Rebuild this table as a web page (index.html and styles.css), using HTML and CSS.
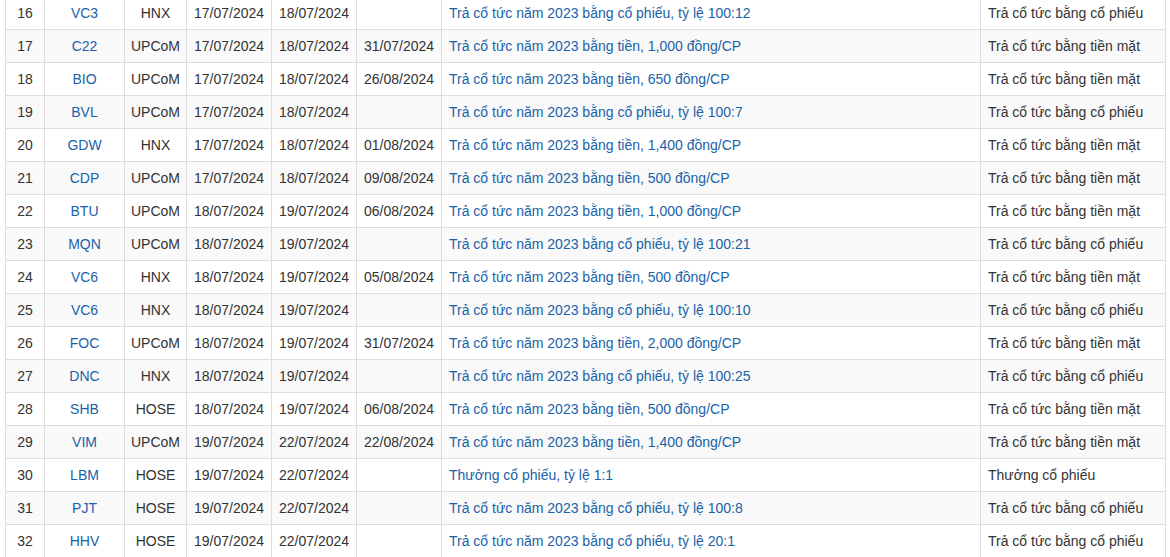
FILE: index.html
```html
<!DOCTYPE html>
<html lang="vi">
<head>
<meta charset="utf-8">
<link rel="stylesheet" href="styles.css">
</head>
<body>
<div class="wrap">
<table class="grid">
<colgroup>
<col class="c-no"><col class="c-tk"><col class="c-ex"><col class="c-d1"><col class="c-d2"><col class="c-d3"><col class="c-desc"><col class="c-type">
</colgroup>
<tbody>
<tr><td class="ctr">16</td><td class="ctr"><a>VC3</a></td><td class="ctr">HNX</td><td class="ctr">17/07/2024</td><td class="ctr">18/07/2024</td><td class="ctr"></td><td><a>Trả cổ tức năm 2023 bằng cổ phiếu, tỷ lệ 100:12</a></td><td>Trả cổ tức bằng cổ phiếu</td></tr>
<tr class="alt"><td class="ctr">17</td><td class="ctr"><a>C22</a></td><td class="ctr">UPCoM</td><td class="ctr">17/07/2024</td><td class="ctr">18/07/2024</td><td class="ctr">31/07/2024</td><td><a>Trả cổ tức năm 2023 bằng tiền, 1,000 đồng/CP</a></td><td>Trả cổ tức bằng tiền mặt</td></tr>
<tr><td class="ctr">18</td><td class="ctr"><a>BIO</a></td><td class="ctr">UPCoM</td><td class="ctr">17/07/2024</td><td class="ctr">18/07/2024</td><td class="ctr">26/08/2024</td><td><a>Trả cổ tức năm 2023 bằng tiền, 650 đồng/CP</a></td><td>Trả cổ tức bằng tiền mặt</td></tr>
<tr class="alt"><td class="ctr">19</td><td class="ctr"><a>BVL</a></td><td class="ctr">UPCoM</td><td class="ctr">17/07/2024</td><td class="ctr">18/07/2024</td><td class="ctr"></td><td><a>Trả cổ tức năm 2023 bằng cổ phiếu, tỷ lệ 100:7</a></td><td>Trả cổ tức bằng cổ phiếu</td></tr>
<tr><td class="ctr">20</td><td class="ctr"><a>GDW</a></td><td class="ctr">HNX</td><td class="ctr">17/07/2024</td><td class="ctr">18/07/2024</td><td class="ctr">01/08/2024</td><td><a>Trả cổ tức năm 2023 bằng tiền, 1,400 đồng/CP</a></td><td>Trả cổ tức bằng tiền mặt</td></tr>
<tr class="alt"><td class="ctr">21</td><td class="ctr"><a>CDP</a></td><td class="ctr">UPCoM</td><td class="ctr">17/07/2024</td><td class="ctr">18/07/2024</td><td class="ctr">09/08/2024</td><td><a>Trả cổ tức năm 2023 bằng tiền, 500 đồng/CP</a></td><td>Trả cổ tức bằng tiền mặt</td></tr>
<tr><td class="ctr">22</td><td class="ctr"><a>BTU</a></td><td class="ctr">UPCoM</td><td class="ctr">18/07/2024</td><td class="ctr">19/07/2024</td><td class="ctr">06/08/2024</td><td><a>Trả cổ tức năm 2023 bằng tiền, 1,000 đồng/CP</a></td><td>Trả cổ tức bằng tiền mặt</td></tr>
<tr class="alt"><td class="ctr">23</td><td class="ctr"><a>MQN</a></td><td class="ctr">UPCoM</td><td class="ctr">18/07/2024</td><td class="ctr">19/07/2024</td><td class="ctr"></td><td><a>Trả cổ tức năm 2023 bằng cổ phiếu, tỷ lệ 100:21</a></td><td>Trả cổ tức bằng cổ phiếu</td></tr>
<tr><td class="ctr">24</td><td class="ctr"><a>VC6</a></td><td class="ctr">HNX</td><td class="ctr">18/07/2024</td><td class="ctr">19/07/2024</td><td class="ctr">05/08/2024</td><td><a>Trả cổ tức năm 2023 bằng tiền, 500 đồng/CP</a></td><td>Trả cổ tức bằng tiền mặt</td></tr>
<tr class="alt"><td class="ctr">25</td><td class="ctr"><a>VC6</a></td><td class="ctr">HNX</td><td class="ctr">18/07/2024</td><td class="ctr">19/07/2024</td><td class="ctr"></td><td><a>Trả cổ tức năm 2023 bằng cổ phiếu, tỷ lệ 100:10</a></td><td>Trả cổ tức bằng cổ phiếu</td></tr>
<tr><td class="ctr">26</td><td class="ctr"><a>FOC</a></td><td class="ctr">UPCoM</td><td class="ctr">18/07/2024</td><td class="ctr">19/07/2024</td><td class="ctr">31/07/2024</td><td><a>Trả cổ tức năm 2023 bằng tiền, 2,000 đồng/CP</a></td><td>Trả cổ tức bằng tiền mặt</td></tr>
<tr class="alt"><td class="ctr">27</td><td class="ctr"><a>DNC</a></td><td class="ctr">HNX</td><td class="ctr">18/07/2024</td><td class="ctr">19/07/2024</td><td class="ctr"></td><td><a>Trả cổ tức năm 2023 bằng cổ phiếu, tỷ lệ 100:25</a></td><td>Trả cổ tức bằng cổ phiếu</td></tr>
<tr><td class="ctr">28</td><td class="ctr"><a>SHB</a></td><td class="ctr">HOSE</td><td class="ctr">18/07/2024</td><td class="ctr">19/07/2024</td><td class="ctr">06/08/2024</td><td><a>Trả cổ tức năm 2023 bằng tiền, 500 đồng/CP</a></td><td>Trả cổ tức bằng tiền mặt</td></tr>
<tr class="alt"><td class="ctr">29</td><td class="ctr"><a>VIM</a></td><td class="ctr">UPCoM</td><td class="ctr">19/07/2024</td><td class="ctr">22/07/2024</td><td class="ctr">22/08/2024</td><td><a>Trả cổ tức năm 2023 bằng tiền, 1,400 đồng/CP</a></td><td>Trả cổ tức bằng tiền mặt</td></tr>
<tr><td class="ctr">30</td><td class="ctr"><a>LBM</a></td><td class="ctr">HOSE</td><td class="ctr">19/07/2024</td><td class="ctr">22/07/2024</td><td class="ctr"></td><td><a>Thưởng cổ phiếu, tỷ lệ 1:1</a></td><td>Thưởng cổ phiếu</td></tr>
<tr class="alt"><td class="ctr">31</td><td class="ctr"><a>PJT</a></td><td class="ctr">HOSE</td><td class="ctr">19/07/2024</td><td class="ctr">22/07/2024</td><td class="ctr"></td><td><a>Trả cổ tức năm 2023 bằng cổ phiếu, tỷ lệ 100:8</a></td><td>Trả cổ tức bằng cổ phiếu</td></tr>
<tr><td class="ctr">32</td><td class="ctr"><a>HHV</a></td><td class="ctr">HOSE</td><td class="ctr">19/07/2024</td><td class="ctr">22/07/2024</td><td class="ctr"></td><td><a>Trả cổ tức năm 2023 bằng cổ phiếu, tỷ lệ 20:1</a></td><td>Trả cổ tức bằng cổ phiếu</td></tr>
</tbody>
</table>
</div>
</body>
</html>
```
FILE: styles.css
```css
html, body {
  margin: 0;
  padding: 0;
  background: #fff;
}
body {
  font-family: "Liberation Sans", Arial, sans-serif;
  font-size: 14px;
  line-height: 20px;
  color: #333;
  overflow: hidden;
}
.wrap {
  padding: 0 5px;
  margin-top: -4px;
}
.grid {
  border-collapse: collapse;
  table-layout: fixed;
  width: 1161px;
}
.c-no { width: 39px; }
.c-tk { width: 80px; }
.c-ex { width: 62px; }
.c-d1 { width: 85px; }
.c-d2 { width: 85px; }
.c-d3 { width: 85px; }
.c-desc { width: 539px; }
.c-type { width: 185px; }
.grid td {
  border: 1px solid #ddd;
  padding: 6px 7px 6px 7px;
  white-space: nowrap;
  overflow: hidden;
  vertical-align: middle;
  text-align: left;
}
.grid td.ctr {
  text-align: center;
  padding-left: 2px;
  padding-right: 2px;
}
.grid tr.alt td {
  background: #f9f9f9;
}
.grid a {
  color: #1a62a8;
  text-decoration: none;
}
```
